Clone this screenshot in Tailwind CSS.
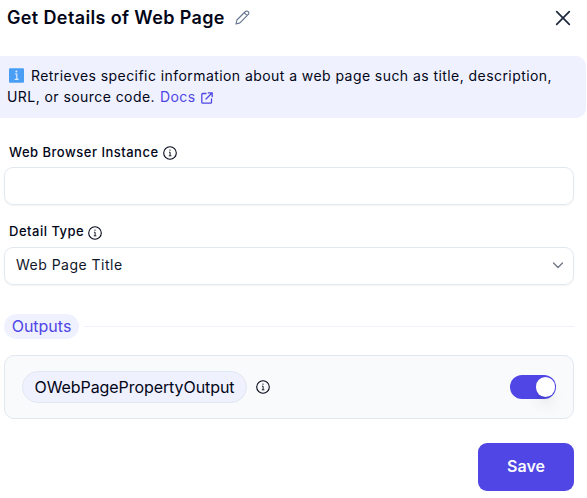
<!DOCTYPE html>
<html lang="en">
<head>
<meta charset="utf-8">
<title>Get Details of Web Page</title>
<script src="https://cdn.jsdelivr.net/npm/@tailwindcss/browser@4"></script>
</head>
<body class="h-[498px] w-[587px] overflow-hidden bg-white font-['Inter',sans-serif] text-slate-950">
<svg class="hidden">
  <symbol id="info" viewBox="0 0 14 14"><circle cx="7" cy="7" r="6.3" fill="none" stroke="currentColor" stroke-width="1.1"/><path d="M6 6.200h1.100v3.500M5.800 9.800h2.600" fill="none" stroke="currentColor" stroke-width=".9"/><circle cx="7" cy="4.1" r=".7" fill="currentColor"/></symbol>
</svg>
<header class="flex h-14 items-start pl-[7px] pr-[16px] pt-1">
  <h1 class="whitespace-nowrap text-[18px] leading-7 font-semibold tracking-[0.37px]">Get Details of Web Page</h1>
  <svg class="ml-[10px] mt-[6px] h-[15px] w-[15px] text-slate-500" viewBox="0 0 15 15" fill="none" stroke="currentColor" stroke-width="1.1" stroke-linejoin="round"><path d="M1 14l.9-4L10.400 1.500a1.800 1.800 0 0 1 2.600 0l.3.3a1.800 1.800 0 0 1 0 2.600L4.900 12.900zM9.200 2.700l3 3"/></svg>
  <svg class="ml-auto mt-[6px] h-4 w-4 text-slate-800" viewBox="0 0 16 16" fill="none" stroke="currentColor" stroke-width="1.7" stroke-linecap="round"><path d="M1.700 1.700l12.600 12.600M14.300 1.700L1.700 14.300"/></svg>
</header>
<section class="mr-px h-[62px] rounded-r-[10px] bg-[#eff1ff] pl-[7px] pt-[9px] text-[14px] leading-[21px] tracking-[0.435px] whitespace-nowrap">
  <div class="flex items-center">
    <svg class="ml-[2px] mr-[7px] h-[15px] w-[15px]" viewBox="0 0 15 15"><rect width="15" height="14.500" y=".3" rx="1" fill="#4a9ff5"/><path d="M5.900 6h1.900v5M5.700 11.300h3.900" fill="none" stroke="#dcecff" stroke-width="1.200"/><circle cx="7.400" cy="3.400" r="1" fill="#dcecff"/></svg>
    <span>Retrieves specific information about a web page such as title, description,</span>
  </div>
  <div class="flex items-center">
    <span>URL, or source code.</span>
    <a class="ml-[5px] flex items-center text-[#4f46e5]">Docs
      <svg class="ml-[5px] mt-[2px] h-3 w-3" viewBox="0 0 12 12" fill="none" stroke="currentColor" stroke-width="1.300" stroke-linecap="round" stroke-linejoin="round"><path d="M5 1.500H1.800Q.8 1.500.8 2.500v7.700q0 1 1 1h7.700q1 0 1-1V7M7.300.8h3.900v3.900M11 1L5 7"/></svg>
    </a>
  </div>
</section>
<main class="pl-1 pr-[13px]">
  <div class="mt-[24px] flex h-5 items-center pl-[5px] text-[13px] font-medium tracking-[0.5px]">
    <span class="mt-px">Web Browser Instance</span>
    <svg class="ml-1 mt-px h-[14px] w-[14px]"><use href="#info"/></svg>
  </div>
  <input class="mt-[5px] block h-[38px] w-full rounded-[9px] border border-slate-200 px-3 shadow-xs outline-none" type="text">
  <div class="mt-[17px] flex h-5 items-center pl-[5px] text-[13px] font-medium tracking-[0.5px]">
    <span>Detail Type</span>
    <svg class="ml-1 mt-px h-[14px] w-[14px]"><use href="#info"/></svg>
  </div>
  <div class="mt-[5px] flex h-[38px] items-center justify-between rounded-[9px] border border-slate-200 pl-[11px] pr-[9px] pb-[2px] shadow-xs">
    <span class="-mt-px text-[14px] tracking-[0.48px] text-slate-900">Web Page Title</span>
    <svg class="h-3 w-3 text-gray-500" viewBox="0 0 12 12" fill="none" stroke="currentColor" stroke-width="1.200" stroke-linecap="round" stroke-linejoin="round"><path d="M1.500 4L6 8.500 10.500 4"/></svg>
  </div>
  <div class="mt-[29px] flex h-[25px] items-center">
    <span class="flex h-[25px] w-[75px] items-center justify-center rounded-full bg-[#eff1ff] pb-[2px] text-[16px] text-[#4f46e5]">Outputs</span>
    <div class="ml-[5px] h-px flex-1 bg-[#eff1ff]"></div>
  </div>
  <section class="mt-4 flex h-16 items-center rounded-[10px] border border-slate-200 bg-slate-50 pl-[17px] pr-[17px]">
    <span class="flex h-8 w-[225px] items-center justify-center rounded-full border border-slate-200 bg-[#eff1ff] pb-px text-[16px] tracking-[-0.07px]">OWebPagePropertyOutput</span>
    <svg class="ml-[9px] h-[14px] w-[14px]"><use href="#info"/></svg>
    <button class="ml-auto flex h-6 w-[46px] items-center justify-end rounded-full bg-[#4f46e5] pr-px" aria-label="Toggle output"><span class="h-5 w-[19px] rounded-full bg-white shadow-lg"></span></button>
  </section>
  <button class="mt-6 ml-auto flex h-12 w-24 items-center justify-center rounded-[9px] bg-[#4f46e5] pb-[2px] text-[16px] font-semibold text-slate-50">Save</button>
</main>
</body>
</html>
